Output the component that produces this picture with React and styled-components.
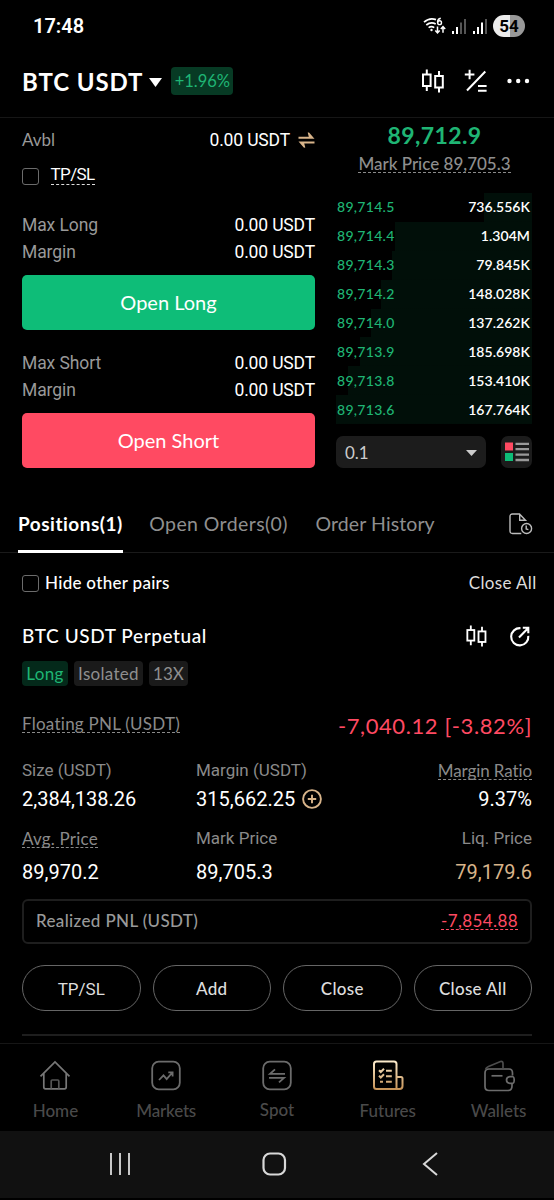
import React, { useState } from "react";
import styled, { createGlobalStyle } from "styled-components";

const GREEN = "#1fb574";
const RED = "#ff4a62";
const GOLD = "#d8b48a";

const GlobalStyle = createGlobalStyle`
  * {
    box-sizing: border-box;
  }
  body {
    margin: 0;
    background: #000;
    color: #fff;
    font-family: Lato, "Open Sans", sans-serif;
    font-variant-ligatures: none;
  }
  button {
    font: inherit;
    color: inherit;
    background: none;
    border: none;
    padding: 0;
  }
  svg {
    display: block;
    flex: none;
  }
`;

const Screen = styled.div`
  width: 554px;
  height: 1200px;
  overflow: hidden;
  display: flex;
  flex-direction: column;
  background: #000;
`;

const Text = styled.span`
  font-family: ${(p) => (p.$roboto ? "Roboto, sans-serif" : "inherit")};
  font-size: ${(p) => p.$size || 17}px;
  font-weight: ${(p) => p.$weight || 400};
  letter-spacing: ${(p) => p.$track || 0}px;
  line-height: ${(p) => p.$line || 20}px;
  color: ${(p) => p.$color || "#fff"};
  white-space: nowrap;
`;

const Dashed = styled(Text)`
  display: block;
  line-height: ${(p) => p.$line || 17}px;
  border-bottom: 1px dashed ${(p) => p.$dash || "#8a8a8a"};
`;

const StatusBar = styled.div`
  height: 50px;
  padding: 2px 29px 0 33px;
  display: flex;
  align-items: center;
  justify-content: space-between;
`;

const StatusIcons = styled.div`
  display: flex;
  align-items: center;
  gap: 5px;
`;

const Battery = styled.div`
  width: 32px;
  height: 22px;
  border-radius: 11px;
  background: linear-gradient(90deg, #ececec 54%, #999 54%);
  color: #000;
  font: 700 17px/22px Roboto, sans-serif;
  text-align: center;
`;

const Header = styled.div`
  height: 68px;
  padding: 0 24px 5px 22px;
  display: flex;
  align-items: center;
  border-bottom: 1px solid #161616;
`;

const Pair = styled.button`
  padding-top: 2px;
  display: flex;
  align-items: center;
  gap: 6px;
`;

const ChangeBadge = styled.div`
  width: 62px;
  height: 28px;
  margin: -1px 0 0 9px;
  border-radius: 4px;
  background: #073a24;
  display: flex;
  align-items: center;
  justify-content: center;
`;

const HeaderIcons = styled.div`
  margin-left: auto;
  display: flex;
  align-items: center;
  gap: 20px;
`;

const Trade = styled.div`
  height: 365px;
  padding: 0 22px;
  display: grid;
  grid-template-columns: 293px 196px;
  column-gap: 21px;
`;

const OrderForm = styled.div`
  display: flex;
  flex-direction: column;
  padding-top: 8px;
`;

const FormLine = styled.div`
  height: 27px;
  display: flex;
  align-items: center;
  justify-content: space-between;
`;

const Balance = styled.div`
  display: flex;
  align-items: center;
  gap: 8px;
`;

const CheckLine = styled.div`
  height: 27px;
  margin-top: 9.5px;
  display: flex;
  align-items: center;
  gap: 11.5px;
  ${Dashed} {
    margin-bottom: 3px;
  }
`;

const Checkbox = styled.span`
  width: 17px;
  height: 17px;
  border: 1.5px solid #6c6c6c;
  border-radius: 3px;
`;

const SideBlock = styled.div`
  margin-top: ${(p) => p.$top}px;
`;

const SideButton = styled.button`
  width: 100%;
  height: 55px;
  margin-top: 9.5px;
  padding-bottom: 1px;
  border-radius: 5px;
  background: ${(p) => p.$bg};
  display: flex;
  align-items: center;
  justify-content: center;
`;

const Book = styled.div`
  display: flex;
  flex-direction: column;
  align-items: center;
`;

const LastPrice = styled.div`
  height: 34px;
  padding-left: 1px;
  display: flex;
  align-items: center;
`;

const MarkPrice = styled.div`
  height: 41px;
  padding: 3px 0 0 1px;
`;

const BookRow = styled.div`
  width: 100%;
  height: 28.9px;
  padding: 0 2px 0 1px;
  display: flex;
  align-items: center;
  justify-content: space-between;
`;

const BookFooter = styled.div`
  width: 100%;
  margin-top: 12px;
  display: flex;
  justify-content: space-between;
`;

const StepSelect = styled.button`
  width: 150px;
  height: 32px;
  padding: 1px 9px 0;
  border-radius: 7px;
  background: #1c1c1c;
  display: flex;
  align-items: center;
  justify-content: space-between;
`;

const LayoutButton = styled.button`
  width: 31px;
  height: 32px;
  border-radius: 7px;
  background: #1c1c1c;
  display: flex;
  align-items: center;
  justify-content: center;
`;

const Tabs = styled.div`
  height: 70px;
  padding: 0 21px 0 18px;
  display: flex;
  border-bottom: 1px solid #1a1a1a;
`;

const Tab = styled.button`
  height: 70px;
  margin-right: ${(p) => p.$gap || 0}px;
  padding-top: 14px;
  border-bottom: 3px solid ${(p) => (p.$active ? "#fff" : "transparent")};
  display: flex;
  align-items: center;
`;

const HistoryButton = styled.button`
  margin: 12px 0 0 auto;
`;

const FilterBar = styled.div`
  height: 60px;
  padding: 0 17.5px 0 22px;
  display: flex;
  align-items: center;
  gap: 6px;
  & > :last-child {
    margin-left: auto;
  }
`;

const Position = styled.div`
  height: 423px;
  margin: 0 22px;
  border-bottom: 2px solid #1e1e1e;
`;

const PositionHead = styled.div`
  height: 47.5px;
  padding: 0 2px 1px 0;
  display: flex;
  align-items: center;
  justify-content: space-between;
`;

const PositionIcons = styled.div`
  display: flex;
  align-items: center;
  gap: 23px;
`;

const Tags = styled.div`
  height: 26px;
  display: flex;
  gap: 6px;
`;

const Tag = styled.span`
  width: ${(p) => p.$width}px;
  height: 25px;
  padding-top: 1px;
  border-radius: 4px;
  background: ${(p) => p.$bg || "#1a1a1a"};
  display: flex;
  align-items: center;
  justify-content: center;
`;

const PnlLine = styled.div`
  height: 73.5px;
  padding-top: 2px;
  display: flex;
  align-items: center;
  justify-content: space-between;
`;

const PnlValue = styled(Text)`
  padding-top: 4px;
`;

const Stats = styled.div`
  display: grid;
  grid-template-columns: 174px 1fr auto;
`;

const Stat = styled.div`
  height: ${(p) => p.$height}px;
  display: flex;
  flex-direction: column;
  align-items: ${(p) => (p.$right ? "flex-end" : "flex-start")};
  gap: ${(p) => p.$gap}px;
`;

const StatLabel = styled.div`
  height: 20px;
  display: flex;
  align-items: flex-start;
  ${Dashed} {
    margin-top: 2px;
  }
`;

const StatValue = styled.div`
  height: 20px;
  display: flex;
  align-items: center;
  gap: 7px;
`;

const Realized = styled.div`
  height: 44.5px;
  padding: 0 12px;
  border: 2px solid #1e1e1e;
  border-radius: 6px;
  display: flex;
  align-items: center;
  justify-content: space-between;
`;

const Actions = styled.div`
  margin-top: 21.5px;
  display: grid;
  grid-template-columns: repeat(4, 1fr);
  gap: 12px;
`;

const Pill = styled.button`
  height: 46px;
  padding-top: 2px;
  border: 1.5px solid #666;
  border-radius: 23px;
  display: flex;
  align-items: center;
  justify-content: center;
`;

const BottomNav = styled.div`
  height: 88px;
  margin-top: 7px;
  border-top: 1px solid #161616;
  display: grid;
  grid-template-columns: repeat(5, 1fr);
`;

const NavItem = styled.button`
  display: flex;
  flex-direction: column;
  align-items: center;
  padding-top: 16px;
  gap: ${(p) => p.$gap}px;
`;

const SystemBar = styled.div`
  height: 67px;
  padding: 0 0 2px 40px;
  background: #111;
  display: grid;
  grid-template-columns: 160px 149px 162px;
  align-items: center;
  justify-items: center;
`;

const book = [
  { price: "89,714.5", amount: "736.556K", depth: 48 },
  { price: "89,714.4", amount: "1.304M", depth: 137 },
  { price: "89,714.3", amount: "79.845K", depth: 140 },
  { price: "89,714.2", amount: "148.028K", depth: 151 },
  { price: "89,714.0", amount: "137.262K", depth: 161 },
  { price: "89,713.9", amount: "185.698K", depth: 172 },
  { price: "89,713.8", amount: "153.410K", depth: 184 },
  { price: "89,713.6", amount: "167.764K", depth: 196 },
];

const WifiIcon = () => (
  <svg width="23" height="18" viewBox="0 0 23 18" fill="none" stroke="#fff" strokeWidth="1.7">
    <path d="M1 5.2Q6.500 0.200 13 2.600" />
    <path d="M3.300 8Q8 4.200 12.700 7" />
    <path d="M5.600 10.600Q8.500 8.600 11.200 10.600" />
    <circle cx="8.500" cy="13" r="1.200" fill="#fff" stroke="none" />
    <path d="M17.800 1.300Q14.500 2 14.500 5.400" strokeWidth="1.400" />
    <circle cx="16.600" cy="5.700" r="1.900" strokeWidth="1.400" />
    <path d="M14.500 9.500V15.500M12.300 13.500L14.500 15.800L16.700 13.500M20 15.800V10M17.800 12L20 9.700L22.200 12" strokeWidth="1.500" />
  </svg>
);

const SignalIcon = ({ level }) => (
  <svg width="16" height="17" viewBox="0 0 16 17">
    {[3, 7, 11.5, 15].map((h, i) => (
      <rect key={h} x={1 + i * 4} y={16 - h} width="2" height={h} fill={i < level ? "#fff" : "#555"} />
    ))}
  </svg>
);

const CandlesIcon = ({ width, height }) => (
  <svg width={width} height={height} viewBox="0 0 22 24" fill="none" stroke="#fff" strokeWidth="2">
    <rect x="1" y="5.500" width="7.600" height="11.500" />
    <rect x="13.200" y="7" width="7.600" height="11.500" />
    <path d="M4.800 0.500V5.500M4.800 17V22M17 2V7M17 18.500V23.500" />
  </svg>
);

const CalcIcon = () => (
  <svg width="23" height="24" viewBox="0 0 23 24" fill="none" stroke="#fff" strokeWidth="2">
    <path d="M0.800 5.500H10.400M5.600 0.700V10.300M3 21.500L21.300 2.500M14 17H22.600M14 21.800H22.600" />
  </svg>
);

const DotsIcon = () => (
  <svg width="23" height="6" viewBox="0 0 23 6" fill="#fff">
    <circle cx="2.500" cy="3" r="2.200" />
    <circle cx="11.200" cy="3" r="2.200" />
    <circle cx="20" cy="3" r="2.200" />
  </svg>
);

const SwapIcon = () => (
  <svg width="17" height="16" viewBox="0 0 17 16" fill={GOLD}>
    <path d="M0.500 6.700V4.700H10.800L9.700 0.600L11 0.400L16.500 6.700ZM16.500 9.500V11.500H6.200L7.300 15.400L6 15.800L0.500 9.500Z" />
  </svg>
);

const LayoutIcon = () => (
  <svg width="24" height="20" viewBox="0 0 24 20">
    <rect width="8" height="8" y="0.500" fill={RED} />
    <rect width="8" height="8" y="11" fill="#0ebd78" />
    <path d="M10.500 1.800H24M10.500 7.200H24M10.500 12.600H24M10.500 18H24" stroke="#999" strokeWidth="2.300" />
  </svg>
);

const HistoryIcon = () => (
  <svg width="24" height="22" viewBox="0 0 24 22" fill="none" stroke="#bdbdbd" strokeWidth="1.400">
    <path d="M12.300 20.500H3.500Q1 20.500 1 18V3.500Q1 1 3.500 1H10.500L16.500 7.200H10.700V1" />
    <circle cx="17.600" cy="15.500" r="5" />
    <path d="M17.200 12.600V15.900L19.400 16.600" />
  </svg>
);

const ShareIcon = () => (
  <svg width="20" height="21" viewBox="0 0 20 21" fill="none" stroke="#fff" strokeWidth="2.100">
    <path d="M10.500 2.200A8.600 8.600 0 1 0 18.300 9.800" />
    <path d="M9 11.500L18 2.300M12.800 1.800H18.300V7.300" />
  </svg>
);

const PlusCircle = () => (
  <svg width="20" height="20" viewBox="0 0 20 20" fill="none" stroke={GOLD} strokeWidth="1.900">
    <circle cx="10" cy="10" r="8.900" />
    <path d="M5.800 10H14.200M10 5.800V14.200" />
  </svg>
);

const HomeIcon = () => (
  <svg width="32" height="32" viewBox="0 0 32 32" fill="none" stroke="#777" strokeWidth="1.700">
    <path d="M1.500 16.300L16 2L30.500 16.300M4.800 13.500V27Q4.800 28.800 6.500 28.800H25.500Q27.200 28.800 27.200 27V13.500" />
    <path d="M12.200 28.500V21Q12.200 20 13.200 20H18.800Q19.800 20 19.800 21V28.500" stroke="#555" />
  </svg>
);

const MarketsIcon = () => (
  <svg width="32" height="32" viewBox="0 0 32 32" fill="none" stroke="#6c6c6c" strokeWidth="1.800">
    <rect x="2.200" y="1.700" width="27.600" height="27.600" rx="6.500" />
    <path d="M9 20L13.500 15.300L16.700 19L22.300 12.500M18.300 12.300H22.600V16.500" />
  </svg>
);

const SpotIcon = () => (
  <svg width="32" height="32" viewBox="0 0 32 32" fill="none" stroke="#6c6c6c" strokeWidth="1.800">
    <rect x="2.200" y="1.700" width="27.600" height="27.600" rx="6.500" />
    <path d="M24 13.800H9L14 9.300M8 17.800H23L18 22.300" />
  </svg>
);

const FuturesIcon = () => (
  <svg width="32" height="32" viewBox="0 0 32 32" fill="none" stroke="url(#gold)" strokeWidth="2">
    <defs>
      <linearGradient id="gold" gradientUnits="userSpaceOnUse" x1="0" y1="0" x2="0" y2="30">
        <stop offset="0" stopColor="#fff0d2" />
        <stop offset="1" stopColor="#c59155" />
      </linearGradient>
    </defs>
    <path d="M24.500 29H4.500Q2 29 2 26.500V4Q2 1.500 4.500 1.500H22Q24.500 1.500 24.500 4V29ZM24.500 17H29Q30.500 17 30.500 18.500V26Q30.500 29 27.500 29H24" />
    <path d="M7 10.200L8.800 12L12 8.800M14 10.700H19.800M7 15.700L8.800 17.500L12 14.300M14 16.200H19.800M8 21.700H11M14 21.700H19.800" />
  </svg>
);

const WalletIcon = () => (
  <svg width="32" height="32" viewBox="0 0 32 32" fill="none" stroke="#6c6c6c" strokeWidth="1.700">
    <path d="M29.500 15.500V13Q29.500 9 26 9H6Q2 9 2 13V26.500Q2 30.500 6 30.500H25Q29 30.500 29 26V23.300" />
    <path d="M30 16.700H27Q23.500 17 23.500 20Q23.500 23 27 23.300H30Q31.200 23 31.200 20Q31.200 17 30 16.700Z" />
    <path d="M8.500 15.800H19.500" />
    <path d="M2.500 9.500Q3 7.500 5.500 6.500L17.500 1.500Q20 1 20 3.500V8.500" stroke="#4c4c4c" />
  </svg>
);

const navItems = [
  { label: "Home", Icon: HomeIcon },
  { label: "Markets", Icon: MarketsIcon, track: -0.2 },
  { label: "Spot", Icon: SpotIcon },
  { label: "Futures", Icon: FuturesIcon },
  { label: "Wallets", Icon: WalletIcon },
];

const Side = ({ label, button, bg, top }) => (
  <SideBlock $top={top}>
    <FormLine>
      <Text $roboto $size={17.5} $track={-0.1} $color="#999">
        {label}
      </Text>
      <Text $roboto $size={17.5} $track={-0.15}>
        0.00 USDT
      </Text>
    </FormLine>
    <FormLine>
      <Text $roboto $size={17.5} $track={-0.1} $color="#999">
        Margin
      </Text>
      <Text $roboto $size={17.5} $track={-0.15}>
        0.00 USDT
      </Text>
    </FormLine>
    <SideButton $bg={bg}>
      <Text $size={20} $line={24}>
        {button}
      </Text>
    </SideButton>
  </SideBlock>
);

const App = () => {
  const [tab, setTab] = useState(0);

  return (
    <Screen>
      <GlobalStyle />
      <StatusBar>
        <Text $roboto $size={20} $weight={600}>
          17:48
        </Text>
        <StatusIcons>
          <WifiIcon />
          <SignalIcon level={2} />
          <SignalIcon level={3} />
          <Battery>54</Battery>
        </StatusIcons>
      </StatusBar>

      <Header>
        <Pair>
          <Text $size={24} $weight={700} $line={30} $track={0.9}>
            BTC USDT
          </Text>
          <svg width="13" height="9" viewBox="0 0 13 9" fill="#fff">
            <path d="M0 0H13L6.500 9Z" />
          </svg>
        </Pair>
        <ChangeBadge>
          <Text $size={16.5} $color={GREEN}>
            +1.96%
          </Text>
        </ChangeBadge>
        <HeaderIcons>
          <CandlesIcon width={22} height={24} />
          <CalcIcon />
          <DotsIcon />
        </HeaderIcons>
      </Header>

      <Trade>
        <OrderForm>
          <FormLine>
            <Text $color="#999">Avbl</Text>
            <Balance>
              <Text $roboto $size={17.5} $track={-0.15}>
                0.00 USDT
              </Text>
              <SwapIcon />
            </Balance>
          </FormLine>
          <CheckLine>
            <Checkbox />
            <Dashed $roboto $track={-0.6} $line={20} $dash="#ddd">
              TP/SL
            </Dashed>
          </CheckLine>
          <Side label="Max Long" button="Open Long" bg="#0ebd78" top={22} />
          <Side label="Max Short" button="Open Short" bg={RED} top={19.4} />
        </OrderForm>

        <Book>
          <LastPrice>
            <Text $size={23} $weight={700} $color={GREEN} $track={0.4}>
              89,712.9
            </Text>
          </LastPrice>
          <MarkPrice>
            <Dashed $color="#8f8f8f" $weight={500}>
              Mark Price 89,705.3
            </Dashed>
          </MarkPrice>
          {book.map((row) => (
            <BookRow
              key={row.price}
              style={{
                background: `linear-gradient(#010f09, #010f09) right / ${row.depth}px 100% no-repeat`,
              }}
            >
              <Text $size={14} $color={GREEN} $weight={500} $track={0.3}>
                {row.price}
              </Text>
              <Text $size={14} $weight={600} $track={0.05}>
                {row.amount}
              </Text>
            </BookRow>
          ))}
          <BookFooter>
            <StepSelect>
              <Text $color="#ccc">0.1</Text>
              <svg width="11" height="6" viewBox="0 0 11 6" fill="#ccc">
                <path d="M0 0H11L5.500 6Z" />
              </svg>
            </StepSelect>
            <LayoutButton>
              <LayoutIcon />
            </LayoutButton>
          </BookFooter>
        </Book>
      </Trade>

      <Tabs>
        <Tab $active={tab === 0} $gap={26.5} onClick={() => setTab(0)}>
          <Text $size={19} $weight={700} $track={0.5}>
            Positions(1)
          </Text>
        </Tab>
        <Tab $active={tab === 1} $gap={27.5} onClick={() => setTab(1)}>
          <Text $size={19.5} $track={0.4} $color="#8f8f8f">
            Open Orders(0)
          </Text>
        </Tab>
        <Tab $active={tab === 2} onClick={() => setTab(2)}>
          <Text $size={19.5} $track={0.1} $color="#8f8f8f">
            Order History
          </Text>
        </Tab>
        <HistoryButton>
          <HistoryIcon />
        </HistoryButton>
      </Tabs>

      <FilterBar>
        <Checkbox />
        <Text $weight={500} $track={0.3}>
          Hide other pairs
        </Text>
        <Text $color="#ddd" $track={0.35}>
          Close All
        </Text>
      </FilterBar>

      <Position>
        <PositionHead>
          <Text $size={19} $weight={500} $track={0.6}>
            BTC USDT Perpetual
          </Text>
          <PositionIcons>
            <CandlesIcon width={21} height={22} />
            <ShareIcon />
          </PositionIcons>
        </PositionHead>
        <Tags>
          <Tag $width={46} $bg="#04291a">
            <Text $color={GREEN} $track={0.4}>
              Long
            </Text>
          </Tag>
          <Tag $width={69}>
            <Text $color="#8f8f8f" $track={0.3}>
              Isolated
            </Text>
          </Tag>
          <Tag $width={39}>
            <Text $color="#8f8f8f">13X</Text>
          </Tag>
        </Tags>
        <PnlLine>
          <Dashed $color="#8a8a8a" $track={0.25}>
            Floating PNL (USDT)
          </Dashed>
          <PnlValue $size={22} $color={RED} $track={0.6}>
            -7,040.12 [-3.82%]
          </PnlValue>
        </PnlLine>
        <Stats>
          <Stat $height={68} $gap={9}>
            <StatLabel>
              <Text $roboto $color="#8a8a8a">
                Size (USDT)
              </Text>
            </StatLabel>
            <StatValue>
              <Text $roboto $size={20}>
                2,384,138.26
              </Text>
            </StatValue>
          </Stat>
          <Stat $height={68} $gap={9}>
            <StatLabel>
              <Text $roboto $color="#8a8a8a">
                Margin (USDT)
              </Text>
            </StatLabel>
            <StatValue>
              <Text $roboto $size={20}>
                315,662.25
              </Text>
              <PlusCircle />
            </StatValue>
          </Stat>
          <Stat $height={68} $gap={9} $right>
            <StatLabel>
              <Dashed $color="#8a8a8a" $track={-0.1}>
                Margin Ratio
              </Dashed>
            </StatLabel>
            <StatValue>
              <Text $roboto $size={20}>
                9.37%
              </Text>
            </StatValue>
          </Stat>
          <Stat $height={71} $gap={14}>
            <StatLabel>
              <Dashed $color="#8a8a8a" $track={0.2}>
                Avg. Price
              </Dashed>
            </StatLabel>
            <StatValue>
              <Text $roboto $size={20}>
                89,970.2
              </Text>
            </StatValue>
          </Stat>
          <Stat $height={71} $gap={14}>
            <StatLabel>
              <Text $roboto $color="#8a8a8a">
                Mark Price
              </Text>
            </StatLabel>
            <StatValue>
              <Text $roboto $size={20}>
                89,705.3
              </Text>
            </StatValue>
          </Stat>
          <Stat $height={71} $gap={14} $right>
            <StatLabel>
              <Text $roboto $color="#8a8a8a">
                Liq. Price
              </Text>
            </StatLabel>
            <StatValue>
              <Text $roboto $size={20} $color={GOLD}>
                79,179.6
              </Text>
            </StatValue>
          </Stat>
        </Stats>
        <Realized>
          <Text $color="#999" $weight={500} $track={0.35}>
            Realized PNL (USDT)
          </Text>
          <Dashed $color={RED} $dash={RED} $track={0.4}>
            -7,854.88
          </Dashed>
        </Realized>
        <Actions>
          {["TP/SL", "Add", "Close", "Close All"].map((label, i) => (
            <Pill key={label}>
              <Text $roboto={i === 0} $weight={i === 0 ? 400 : 500} $track={i === 0 ? 0 : 0.3} $color="#ddd">
                {label}
              </Text>
            </Pill>
          ))}
        </Actions>
      </Position>

      <BottomNav>
        {navItems.map(({ label, Icon, track }) => (
          <NavItem key={label} $gap={label === "Spot" ? 8 : 9}>
            <Icon />
            <Text $color="#4a4a4a" $weight={500} $track={track}>
              {label}
            </Text>
          </NavItem>
        ))}
      </BottomNav>

      <SystemBar>
        <svg width="24" height="24" viewBox="0 0 24 24" stroke="#c8c8c8" strokeWidth="2">
          <path d="M3 1V23M12 1V23M21 1V23" />
        </svg>
        <svg width="25" height="24" viewBox="0 0 25 24" fill="none" stroke="#d8d8d8" strokeWidth="2.200">
          <rect x="1.500" y="1.500" width="21.500" height="21" rx="6.500" />
        </svg>
        <svg width="16" height="24" viewBox="0 0 16 24" fill="none" stroke="#d8d8d8" strokeWidth="2">
          <path d="M15 1L2 12L15 23" />
        </svg>
      </SystemBar>
    </Screen>
  );
};

export default App;
